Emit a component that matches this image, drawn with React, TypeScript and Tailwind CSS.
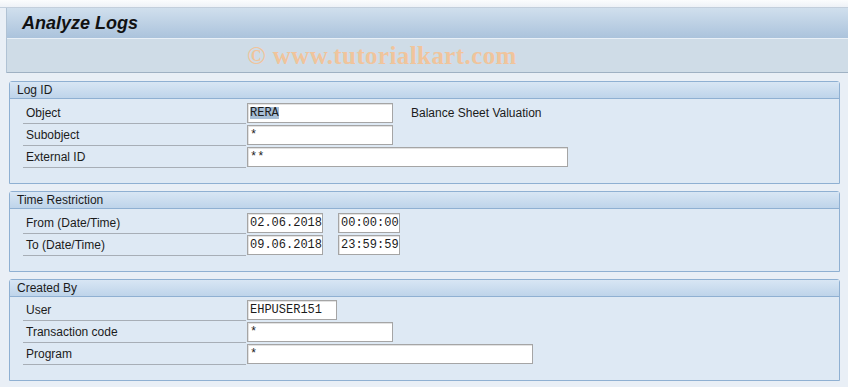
import React from "react";

const label = "font-['Liberation_Sans',Arial,sans-serif] text-[12px] text-[#1b1b1b]";
const mono = "font-['Liberation_Mono','Courier_New',monospace] text-[12px] text-[#1b1b1b]";

function Field({ w, children }: { w: string; children?: React.ReactNode }) {
  return (
    <div
      className={`${w} h-[20px] bg-white border border-[#a5a5a5] shadow-[inset_1px_1px_0_#e2e2e2] flex items-center pl-[2px] ${mono} leading-none`}
    >
      {children}
    </div>
  );
}

function Row({ text, children }: { text: string; children: React.ReactNode }) {
  return (
    <div className="flex h-[22px] items-start">
      <div className={`ml-[13px] w-[223px] h-[21px] border-b border-[#a7aeb6] flex items-center pl-[3px] ${label}`}>{text}</div>
      <div className="ml-[1px] flex items-start">{children}</div>
    </div>
  );
}

function Group({ title, children, pt, pb }: { title: string; children: React.ReactNode; pt: string; pb: string }) {
  return (
    <div className="border border-[#8fb0d2] rounded-t-[3px] bg-[#dee9f4]">
      <div
        className={`h-[17px] bg-gradient-to-b from-[#d8e6f4] to-[#bed4ea] border-b border-[#8fb0d2] flex items-center pl-[7px] ${label}`}
      >
        {title}
      </div>
      <div className={`${pt} ${pb}`}>{children}</div>
    </div>
  );
}

export default function App() {
  return (
    <div className="w-[848px] h-[387px] bg-[#e9eff6] overflow-hidden">
      <div className="h-[8px] bg-gradient-to-b from-[#fbfcfd] to-[#eef2f7] border-b border-[#c3cfdc]" />
      <div className="ml-[6px] border-l border-[#b0c2d4]">
        <div className="h-[31px] bg-gradient-to-b from-[#d0dfed] to-[#abc3dc] border-b border-[#e9f0f7] flex items-center pl-[15px]">
          <span className="font-['Liberation_Sans',Arial,sans-serif] font-bold italic text-[18px] text-[#111]">Analyze Logs</span>
        </div>
        <div className="h-[34px] bg-[#cfdce7] border-b border-[#9fb1c3] flex items-center pl-[240px]">
          <span className="font-['Liberation_Serif','Times_New_Roman',serif] font-bold text-[25px] tracking-[0.4px] text-[#f0c49c] leading-none">
            © www.tutorialkart.com
          </span>
        </div>
      </div>
      <div className="pl-[9px] pr-[8px] pt-[8px] flex flex-col gap-[7px]">
        <Group title="Log ID" pt="pt-[4px]" pb="pb-[14px]">
          <Row text="Object">
            <Field w="w-[146px]">
              <span className="bg-[#a8bfd6]">RERA</span>
            </Field>
            <span className={`ml-[18px] h-[20px] flex items-center ${label}`}>Balance Sheet Valuation</span>
          </Row>
          <Row text="Subobject">
            <Field w="w-[146px]">*</Field>
          </Row>
          <Row text="External ID">
            <Field w="w-[321px]">**</Field>
          </Row>
        </Group>
        <Group title="Time Restriction" pt="pt-[4px]" pb="pb-[14px]">
          <Row text="From (Date/Time)">
            <Field w="w-[76px]">02.06.2018</Field>
            <div className="w-[15px]" />
            <Field w="w-[62px]">00:00:00</Field>
          </Row>
          <Row text="To (Date/Time)">
            <Field w="w-[76px]">09.06.2018</Field>
            <div className="w-[15px]" />
            <Field w="w-[62px]">23:59:59</Field>
          </Row>
        </Group>
        <Group title="Created By" pt="pt-[3px]" pb="pb-[14px]">
          <Row text="User">
            <Field w="w-[90px]">EHPUSER151</Field>
          </Row>
          <Row text="Transaction code">
            <Field w="w-[146px]">*</Field>
          </Row>
          <Row text="Program">
            <Field w="w-[286px]">*</Field>
          </Row>
        </Group>
      </div>
    </div>
  );
}
